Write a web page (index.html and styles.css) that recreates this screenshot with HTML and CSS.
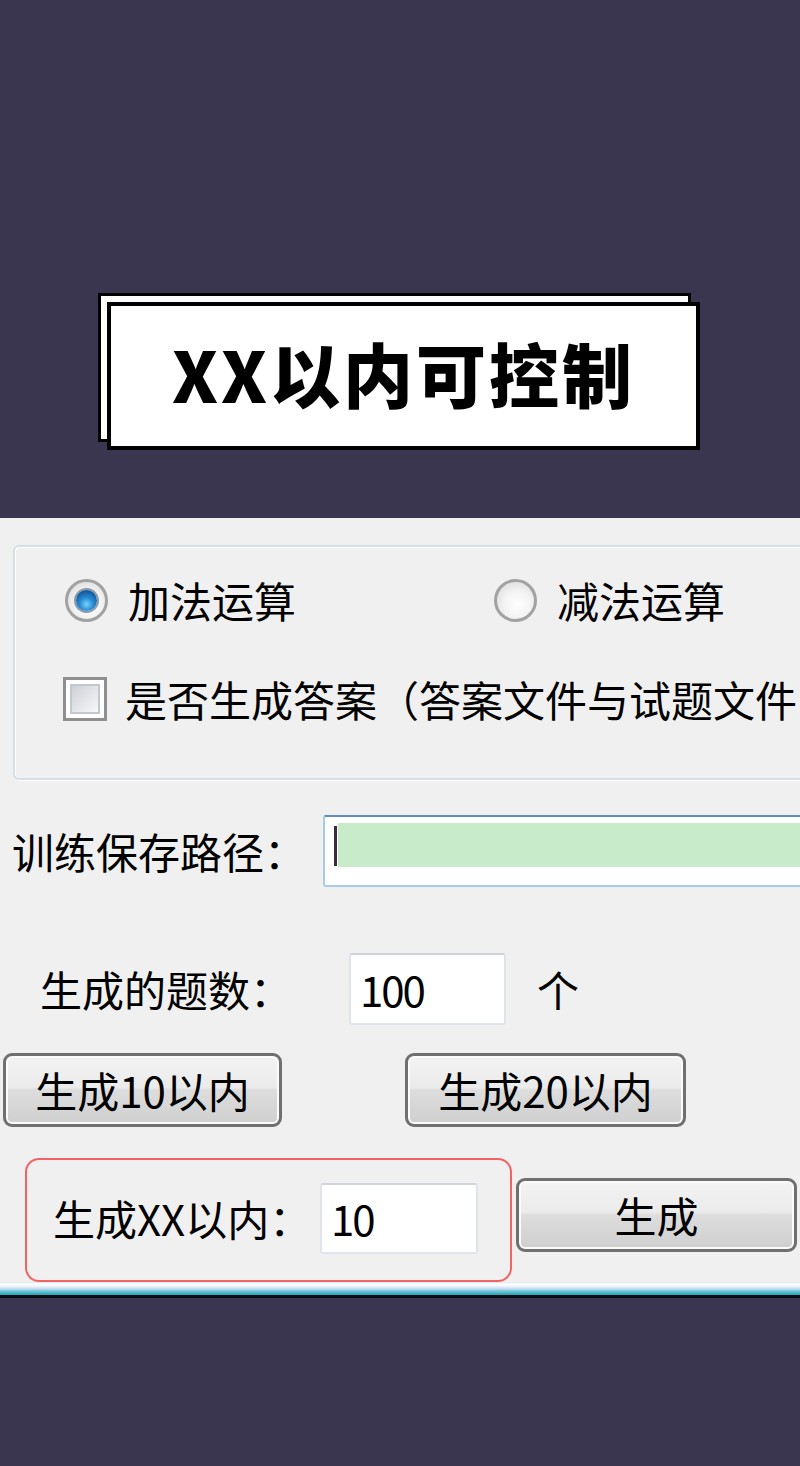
FILE: index.html
```html
<html>
<head>
  <meta charset="UTF-8">
  <meta name="viewport" content="width=device-width, initial-scale=1.0">
  <title>XX以内可控制</title>
  <link rel="stylesheet" href="styles.css">
</head>
<body>

  <header class="banner">
    <div class="title-card">
      <h1>XX以内可控制</h1>
    </div>
  </header>

  <main class="dialog">
    <section class="group">
      <div class="group-row first-row">
        <label class="option option-first"><span class="radio is-checked"></span>加法运算</label>
        <label class="option"><span class="radio"></span>减法运算</label>
      </div>
      <div class="group-row second-row">
        <label class="option option-check"><span class="check"></span>是否生成答案（答案文件与试题文件同目录）</label>
      </div>
    </section>

    <div class="path-row">
      <span class="path-label">训练保存路径：</span>
      <div class="path-field"><span class="caret"></span><span class="fill"></span></div>
    </div>

    <div class="count-row">
      <span class="count-label">生成的题数：</span>
      <div class="field count-field">100</div>
      <span class="unit">个</span>
    </div>

    <div class="button-row">
      <button class="btn btn-ten">生成10以内</button>
      <button class="btn btn-twenty">生成20以内</button>
    </div>

    <div class="custom-row">
      <div class="custom-box">
        <span class="custom-label">生成XX以内：</span>
        <div class="field custom-field">10</div>
      </div>
      <button class="btn btn-go">生成</button>
    </div>
  </main>

  <div class="strip"></div>

</body>
</html>
```

FILE: styles.css
```css
body {
  margin: 0;
  background: #3b3650;
  font-family: "Noto Sans CJK SC", "Noto Sans", sans-serif;
}

/* banner */

.banner {
  height: 518px;
  box-sizing: border-box;
  padding: 302px 0 0 107px;
}

.title-card {
  position: relative;
  width: 593px;
  height: 148px;
  box-sizing: border-box;
  border: 4px solid #000;
  background: #fff;
  display: flex;
  align-items: center;
  justify-content: center;
}

.title-card::before {
  content: "";
  position: absolute;
  top: -13px;
  left: -13px;
  width: 593px;
  height: 149px;
  box-sizing: border-box;
  border: 3px solid #000;
  background: #fff;
  z-index: -1;
}

.title-card h1 {
  margin: 0 0 6px 0;
  font-size: 70px;
  font-weight: 900;
  line-height: 1;
  letter-spacing: 3px;
  color: #000;
}

/* dialog */

.dialog {
  height: 764px;
  box-sizing: border-box;
  padding-top: 27px;
  background: #f0f0f0;
  overflow: hidden;
  color: #000;
  font-size: 42px;
  line-height: 1;
  white-space: nowrap;
}

.group {
  margin-left: 13px;
  width: 850px;
  height: 235px;
  box-sizing: border-box;
  border: 2px solid #d5dfe6;
  border-radius: 6px;
  box-shadow: inset 1px 1px 0 #fff, 1px 1px 0 #fff;
}

.group-row {
  display: flex;
  align-items: center;
  height: 46px;
}

.first-row {
  margin-top: 30px;
}

.second-row {
  margin-top: 53px;
}

.option {
  display: flex;
  align-items: center;
  gap: 20px;
}

.option-first {
  flex: none;
  width: 429px;
  padding-left: 50px;
}

.option-check {
  padding-left: 48px;
  gap: 18px;
}

.radio {
  flex: none;
  display: grid;
  place-items: center;
  width: 43px;
  height: 43px;
  box-sizing: border-box;
  border-radius: 50%;
  border: 3px solid #a2a2a2;
  background: radial-gradient(circle at 55% 60%, #ffffff 0, #f3f3f3 45%, #d4d4d4 100%);
}

.radio.is-checked::after {
  content: "";
  width: 21px;
  height: 21px;
  border-radius: 50%;
  background: radial-gradient(circle at 50% 68%, #78d4fb 0, #2b90d8 35%, #0c4a8a 85%);
  box-shadow: 0 0 0 2px #8a9aa8;
}

.check {
  flex: none;
  width: 44px;
  height: 44px;
  box-sizing: border-box;
  border: 3px solid #8f8f8f;
  padding: 4px;
  background: #fff;
}

.check::after {
  content: "";
  display: block;
  height: 100%;
  box-sizing: border-box;
  border: 2px solid #c3c8ce;
  background: linear-gradient(135deg, #cdd1d7, #f7f7f7);
}

/* path */

.path-row {
  display: flex;
  align-items: center;
  height: 72px;
  margin-top: 35px;
}

.path-label {
  flex: none;
  width: 311px;
  margin-left: 12px;
}

.path-field {
  flex: none;
  display: flex;
  align-items: flex-start;
  width: 520px;
  height: 72px;
  box-sizing: border-box;
  padding: 6px 0 0 9px;
  border: 2px solid #a9cbe6;
  border-top-color: #5b8fc2;
  border-radius: 3px;
  background: #fff;
}

.caret {
  flex: none;
  width: 3px;
  height: 40px;
  margin-top: 3px;
  background: #3a2c3c;
}

.fill {
  flex: 1;
  height: 44px;
  margin-left: 1px;
  background: #c8ecca;
}

/* count */

.count-row {
  display: flex;
  align-items: center;
  height: 72px;
  margin-top: 66px;
}

.count-label {
  flex: none;
  width: 309px;
  margin-left: 40px;
}

.field {
  flex: none;
  display: flex;
  align-items: center;
  box-sizing: border-box;
  padding-left: 9px;
  border: 2px solid #dfe3ea;
  border-top-color: #d0d4db;
  border-radius: 3px;
  background: #fff;
  letter-spacing: -2px;
}

.count-field {
  width: 157px;
  height: 72px;
}

.unit {
  margin-left: 31px;
}

/* buttons */

.button-row {
  display: flex;
  height: 74px;
  margin-top: 28px;
}

.btn {
  flex: none;
  height: 74px;
  box-sizing: border-box;
  padding: 0;
  border: 3px solid #707070;
  border-radius: 9px;
  background: linear-gradient(#f3f3f3, #ebebeb 46%, #dddddd 50%, #cfcfcf);
  box-shadow: inset 0 0 0 2px #fbfbfb;
  font-family: inherit;
  font-size: 42px;
  line-height: 1;
  color: #000;
}

.btn-ten {
  width: 279px;
  margin-left: 3px;
}

.btn-twenty {
  width: 281px;
  margin-left: 123px;
}

/* custom range */

.custom-row {
  display: flex;
  align-items: flex-start;
  margin-top: 31px;
}

.custom-box {
  flex: none;
  display: flex;
  align-items: center;
  width: 487px;
  height: 124px;
  box-sizing: border-box;
  margin-left: 25px;
  padding: 0 0 4px 26px;
  border: 2px solid #f26464;
  border-radius: 14px;
}

.custom-label {
  flex: none;
  width: 267px;
}

.custom-field {
  width: 158px;
  height: 71px;
}

.btn-go {
  width: 281px;
  margin: 20px 0 0 4px;
}

.strip {
  height: 16px;
  background: linear-gradient(#dce5ec 0, #ffffff 2px, #f2f6fb 4px, #c4d8ee 7px, #6ec8dc 9px, #1fa2b2 13px, #0b0b10 13px, #0b0b10 16px);
}
```
